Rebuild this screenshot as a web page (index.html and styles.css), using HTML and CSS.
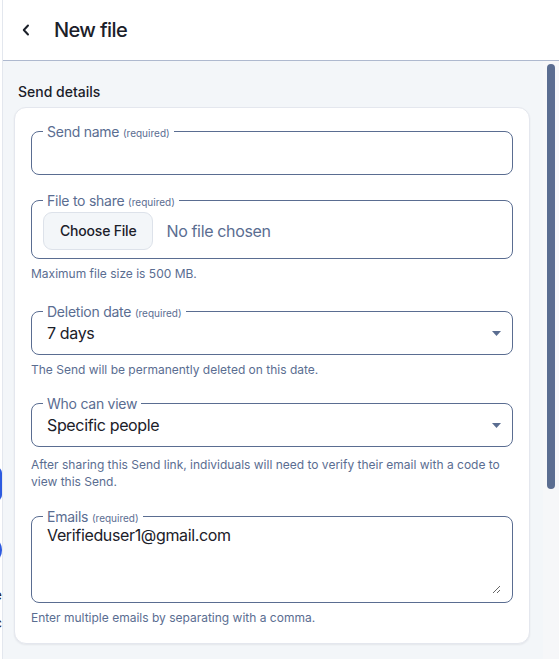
FILE: index.html
```html
<!DOCTYPE html>
<html lang="en">
<head>
<meta charset="utf-8">
<title>New file</title>
<link rel="stylesheet" href="styles.css">
</head>
<body>
<div class="app">
  <div class="page" aria-hidden="true">
    <div class="pg-btn"></div>
    <div class="pg-avatar"></div>
    <p class="pg-text">Share text or files with anyone</p>
    <p class="pg-text pg-text-2">Sends are deleted automatic</p>
  </div>

  <section class="sheet">
    <header class="sheet-head">
      <button class="back" type="button" aria-label="Back">
        <svg width="10" height="14" viewBox="0 0 10 14" fill="none">
          <polyline points="7,2.5 2.8,7 7,11.5" stroke="#1b2029" stroke-width="2" stroke-linecap="round" stroke-linejoin="round"/>
        </svg>
      </button>
      <h1 class="sheet-title">New file</h1>
    </header>

    <div class="sheet-main">
      <div class="sheet-body">
        <h2 class="section-title">Send details</h2>
        <div class="card">
          <div class="field f-name">
            <fieldset class="outline">
              <legend>Send name <small>(required)</small></legend>
              <input class="control" type="text">
            </fieldset>
          </div>

          <div class="field f-file">
            <fieldset class="outline">
              <legend>File to share <small>(required)</small></legend>
              <div class="file-row">
                <button class="file-btn" type="button">Choose File</button>
                <span class="file-status">No file chosen</span>
              </div>
            </fieldset>
            <p class="hint">Maximum file size is 500 MB.</p>
          </div>

          <div class="field f-date">
            <fieldset class="outline">
              <legend>Deletion date <small>(required)</small></legend>
              <div class="select-row">
                <select class="control select">
                  <option>7 days</option>
                </select>
                <svg class="caret" width="9" height="5" viewBox="0 0 9 5"><polygon points="0,0 9,0 4.5,5" fill="#5a6d91"/></svg>
              </div>
            </fieldset>
            <p class="hint">The Send will be permanently deleted on this date.</p>
          </div>

          <div class="field f-who">
            <fieldset class="outline">
              <legend>Who can view</legend>
              <div class="select-row">
                <select class="control select">
                  <option>Specific people</option>
                </select>
                <svg class="caret" width="9" height="5" viewBox="0 0 9 5"><polygon points="0,0 9,0 4.5,5" fill="#5a6d91"/></svg>
              </div>
            </fieldset>
            <p class="hint hint-spaced">After sharing this Send link, individuals will need to verify their email with a code to view this Send.</p>
          </div>

          <div class="field f-emails">
            <fieldset class="outline">
              <legend>Emails <small>(required)</small></legend>
              <textarea class="control area">Verifieduser1@gmail.com</textarea>
            </fieldset>
            <p class="hint">Enter multiple emails by separating with a comma.</p>
          </div>
        </div>

        <h2 class="section-title more">Additional options</h2>
        <div class="card">
          <div class="field f-name">
            <fieldset class="outline">
              <legend>Password</legend>
              <input class="control" type="password">
            </fieldset>
          </div>
        </div>
      </div>

      <div class="scrollbar" aria-hidden="true">
        <div class="thumb"></div>
      </div>
    </div>
  </section>
</div>
</body>
</html>
```

FILE: styles.css
```css
* { box-sizing: border-box; }

html, body {
  margin: 0;
  height: 100%;
}

body {
  background: #ffffff;
  font-family: Inter, "Noto Sans", "Liberation Sans", sans-serif;
  color: #1b2029;
}

.app {
  display: flex;
  height: 100vh;
  overflow: hidden;
}

/* page underneath the side sheet: only its right edge peeks out */
.page {
  flex: 0 0 2px;
  overflow: hidden;
  display: flex;
  flex-direction: column;
  align-items: flex-end;
  padding-top: 467px;
  background: #ffffff;
}

.pg-btn {
  flex: none;
  width: 120px;
  height: 34px;
  border-radius: 6px;
  background: #2c5ae0;
}

.pg-avatar {
  flex: none;
  width: 30px;
  height: 30px;
  margin-top: 34px;
  border-radius: 50%;
  background: #2c5ae0;
}

.pg-text {
  flex: none;
  margin: 20px 0 0;
  white-space: nowrap;
  font-size: 14px;
  line-height: 20px;
  color: #1b2029;
}

.pg-text-2 { margin-top: 8px; }

/* side sheet */
.sheet {
  flex: 1;
  min-width: 0;
  display: flex;
  flex-direction: column;
  background: #f3f6f9;
  border-left: 1px solid #e3e7ee;
}

.sheet-head {
  flex: none;
  height: 61px;
  display: flex;
  align-items: center;
  padding: 0 0 1px 7px;
  gap: 12px;
  background: #ffffff;
  border-bottom: 1px solid #aeb9cf;
}

.back {
  width: 32px;
  height: 32px;
  padding: 0;
  border: 0;
  background: transparent;
  display: flex;
  align-items: center;
  justify-content: center;
}

.sheet-title {
  margin: 0;
  font-size: 20px;
  line-height: 28px;
  font-weight: 500;
  letter-spacing: -0.6px;
  color: #1b2029;
}

.sheet-main {
  flex: 1;
  min-height: 0;
  display: flex;
}

.sheet-body {
  flex: 1;
  min-width: 0;
  overflow: hidden;
  padding: 21px 13px 0 11px;
}

/* scroll track with its thumb */
.scrollbar {
  flex: 0 0 16px;
  padding: 3px 4px;
  background: #f6f7f9;
}

.thumb {
  height: 425px;
  border-radius: 4px;
  background: #5a6d91;
}

.section-title {
  margin: 0 0 5px;
  padding-left: 4px;
  font-size: 14px;
  line-height: 20px;
  font-weight: 500;
  color: #1b2029;
}

.section-title.more { margin-top: 24px; }

.card {
  background: #ffffff;
  border: 1px solid #e4e7ee;
  border-radius: 12px;
  padding: 15px 16px 17px;
  box-shadow: 0 1px 2px rgba(27, 32, 41, 0.07);
}

/* outlined form field */
.outline {
  margin: 0;
  min-width: 0;
  padding: 0 11px 8px;
  border: 1px solid #5a6d91;
  border-radius: 8px;
}

.outline legend {
  padding: 0 4px;
  font-size: 14px;
  line-height: 17px;
  letter-spacing: -0.25px;
  color: #5a6d91;
}

.outline legend small {
  font-size: 10px;
  line-height: 1;
  letter-spacing: 0;
  color: #5a6d91;
}

.control {
  display: block;
  width: 100%;
  height: 26px;
  margin: 0;
  padding: 0 4px;
  border: 0;
  outline: 0;
  background: transparent;
  font: 16px/26px Inter, "Noto Sans", sans-serif;
  letter-spacing: -0.35px;
  color: #1b2029;
}

.select-row {
  display: flex;
  align-items: center;
}

.select {
  flex: 1;
  appearance: none;
  -webkit-appearance: none;
}

.caret { flex: none; margin-right: 0; }

.area {
  height: 69px;
  line-height: 20px;
  resize: vertical;
}

.file-row {
  display: flex;
  align-items: center;
  gap: 13px;
  margin-top: 3px;
}

.file-btn {
  height: 38px;
  padding: 0 16px;
  border: 1px solid #dde2ea;
  border-radius: 9px;
  background: #f3f6f9;
  font: 500 14px/20px Inter, "Noto Sans", sans-serif;
  letter-spacing: -0.2px;
  color: #1b2029;
}

.file-status {
  font-size: 16px;
  letter-spacing: -0.35px;
  color: #5a6d91;
}

.hint {
  margin: 6px 0 0;
  font-size: 12px;
  line-height: 17px;
  color: #5a6d91;
}

.hint-spaced { margin-top: 9px; }

.f-name { margin-bottom: 17px; }
.f-file { margin-bottom: 21px; }
.f-date { margin-bottom: 17px; }
.f-who { margin-bottom: 18px; }
.f-emails { margin-bottom: 0; }
```
